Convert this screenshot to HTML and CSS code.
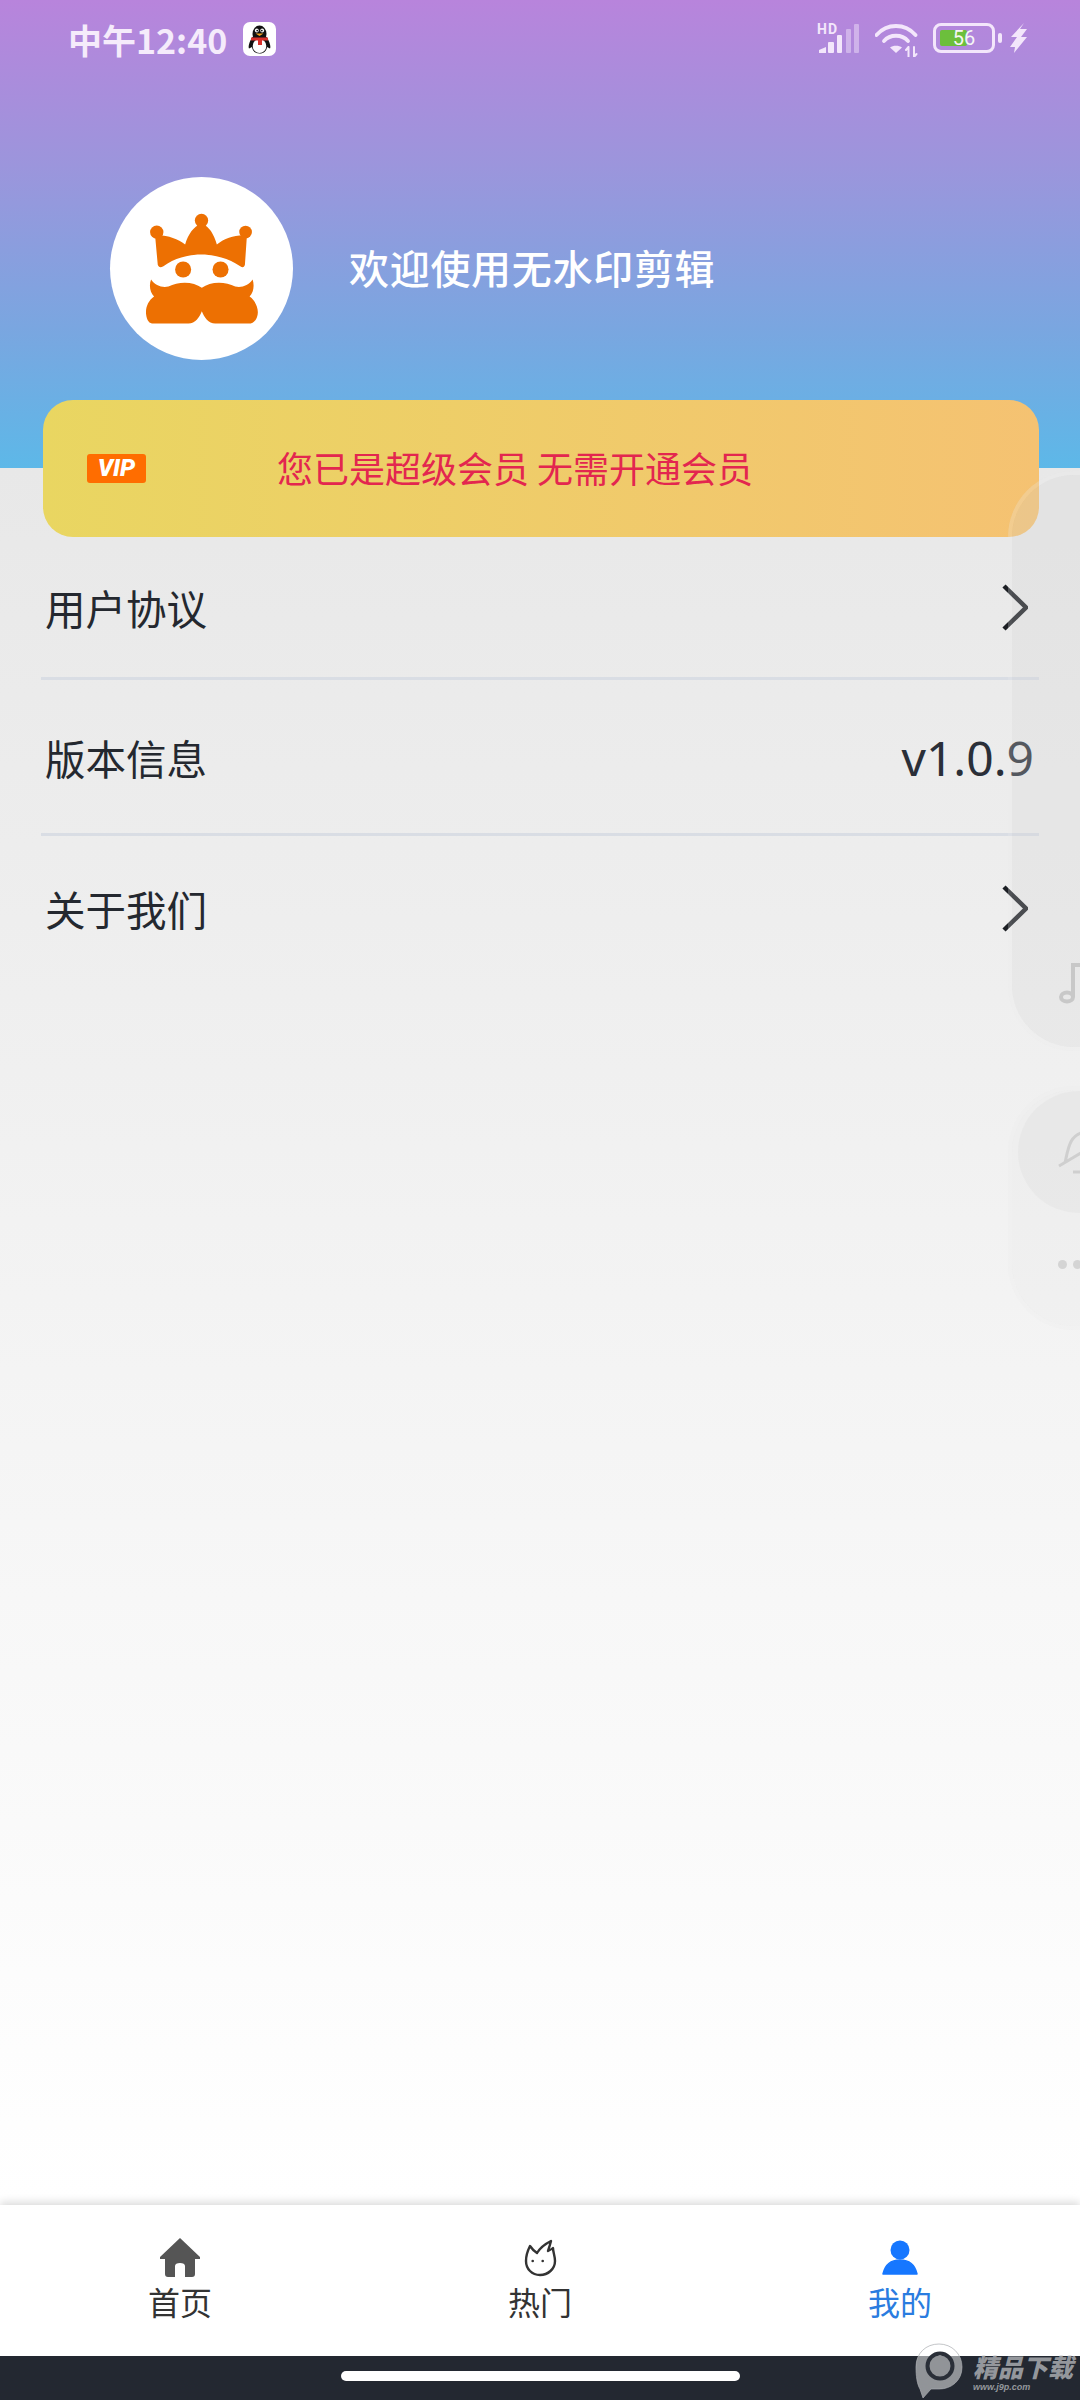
FILE: index.html
```html
<!DOCTYPE html>
<html lang="zh-CN">
<head>
  <meta charset="UTF-8">
  <title>我的</title>
  <link rel="stylesheet" href="styles.css">
</head>
<body>
<div class="page">

  <div class="status">
    <div class="status-left">
      <span class="time">中午12:40</span>
      <svg class="qq" viewBox="0 0 33 34">
        <rect width="33" height="34" rx="7" fill="#fff"/>
        <ellipse cx="16.5" cy="12" rx="7" ry="8.5" fill="#111"/>
        <path d="M9.5 15C6 20 5 25 6 26.5L9 25C9.5 29 12 31.5 16.5 31.5S23.5 29 24 25L27 26.5C28 25 27 20 23.500 15Z" fill="#111"/>
        <ellipse cx="16.500" cy="24" rx="6.800" ry="7" fill="#fff"/>
        <circle cx="13.800" cy="8.500" r="1.900" fill="#fff"/>
        <circle cx="19.200" cy="8.500" r="1.900" fill="#fff"/>
        <circle cx="14.200" cy="8.600" r=".9" fill="#111"/>
        <circle cx="18.800" cy="8.600" r=".9" fill="#111"/>
        <path d="M12.500 11.500H20.500L16.500 14Z" fill="#f0a020"/>
        <path d="M8 15.500H25V18.500H19V23H15V18.500H8Z" fill="#d9302c"/>
      </svg>
    </div>
    <div class="status-right">
      <div class="signal">
        <span class="hd">HD</span>
        <svg viewBox="0 0 43 29" class="signal-bars">
          <path d="M2 29V26L9 23V29Z" fill="#f3e6fb"/>
          <rect x="11" y="18" width="6" height="11" rx="1" fill="#f3e6fb"/>
          <rect x="20" y="11" width="5" height="18" rx="1" fill="#f3e6fb"/>
          <rect x="29" y="5" width="5" height="24" rx="1" fill="#f3e6fb" opacity=".45"/>
          <rect x="37" y="0" width="5" height="29" rx="1" fill="#f3e6fb" opacity=".45"/>
        </svg>
      </div>
      <svg class="wifi" viewBox="0 0 43 33" fill="none" stroke="#f3e6fb" stroke-linecap="round">
        <path d="M1.500 11C12 -1 30 -1 40.500 11" stroke-width="3.800"/>
        <path d="M9 17C15 10 27 10 33 17" stroke-width="3.800"/>
        <path d="M21 29L15 23.500C18 21 24 21 27 23.500Z" fill="#f3e6fb" stroke="none"/>
        <path d="M33.500 23V33M33.500 23L31 26M39 33V23M39 33L41.500 30" stroke-width="2"/>
      </svg>
      <div class="battery">
        <div class="battery-box">
          <span class="battery-fill"></span>
          <span class="battery-num">56</span>
        </div>
        <span class="battery-nub"></span>
      </div>
      <svg class="bolt" viewBox="0 0 17 30">
        <path d="M14 0L1 14H7L0 24H5L4 30L17 14H11L17 6H10Z" fill="#f3e6fb"/>
      </svg>
    </div>
  </div>

  <div class="profile">
    <div class="avatar">
      <svg viewBox="30 20 548 548">
        <circle cx="304" cy="150" r="20" fill="#ed7002"/>
        <circle cx="170" cy="185" r="20" fill="#ed7002"/>
        <circle cx="436" cy="185" r="19" fill="#ed7002"/>
        <path d="M165 195C198 192 232 205 255 222C265 190 280 168 304 160C328 168 340 190 350 222C375 203 405 192 440 195L434 283C432 292 426 292 420 287C350 240 255 240 190 287C182 292 176 292 173 283Z" fill="#ed7002"/>
        <circle cx="249" cy="297" r="24" fill="#ed7002"/>
        <circle cx="361" cy="297" r="24" fill="#ed7002"/>
        <path d="M153 327C165 345 185 352 205 348C235 332 280 332 305 352C330 332 375 332 405 348C425 352 445 345 457 327C463 345 460 365 448 378C468 392 478 420 470 440C464 455 455 459 445 459H345C325 459 312 440 305 422C298 440 285 459 265 459H160C148 459 140 450 138 430C136 410 145 390 162 378C150 365 146 345 153 327Z" fill="#ed7002"/>
      </svg>
    </div>
    <span class="welcome">欢迎使用无水印剪辑</span>
  </div>

  <div class="vip-card">
    <div class="vip-badge">VIP</div>
    <span class="vip-msg">您已是超级会员 无需开通会员</span>
  </div>

  <div class="menu">
    <div class="row row-one">
      <span>用户协议</span>
      <svg class="chev" viewBox="0 0 26 47"><path d="M2 2L24 23.500L2 45" fill="none" stroke="#1c1f24" stroke-width="4.500"/></svg>
    </div>
    <div class="row row-two">
      <span>版本信息</span>
      <span class="version">v1.0.9</span>
    </div>
    <div class="row row-three">
      <span>关于我们</span>
      <svg class="chev" viewBox="0 0 26 47"><path d="M2 2L24 23.500L2 45" fill="none" stroke="#1c1f24" stroke-width="4.500"/></svg>
    </div>
  </div>

  <div class="spacer"></div>

  <div class="tabbar">
    <div class="tab">
      <svg class="tab-icon" viewBox="0 0 40 39">
        <path d="M20 0L40 19V21H35V36C35 38 34 39 32 39H25V28C25 26 23 25 20 25S15 26 15 28V39H8C6 39 5 38 5 36V21H0V19Z" fill="#555"/>
      </svg>
      <span>首页</span>
    </div>
    <div class="tab">
      <svg class="tab-icon" viewBox="0 0 40 39" fill="none" stroke="#333" stroke-width="2.400" stroke-linejoin="round">
        <path d="M10 8C12 11 14 13 17 15C20 10 25 6 31 3C30 7 29 10 28 13C30 12 32 11 33 10C33 14 35 18 35 23C35 31 28 37 20 37C12 37 6 31 6 23C6 17 8 12 10 8Z"/>
        <circle cx="12.700" cy="23" r="1.300" fill="#333" stroke="none"/>
        <circle cx="22.700" cy="23" r="1.300" fill="#333" stroke="none"/>
      </svg>
      <span>热门</span>
    </div>
    <div class="tab tab-active">
      <svg class="tab-icon" viewBox="0 0 40 39">
        <circle cx="20" cy="12" r="9.500" fill="#1677ff"/>
        <path d="M3 36C5 27 11 22 20 22S35 27 37 36Z" fill="#1677ff" stroke="#1677ff" stroke-linejoin="round" stroke-width="1.500"/>
      </svg>
      <span>我的</span>
    </div>
  </div>

  <div class="homebar">
    <span class="home-pill"></span>
  </div>

  <!-- floating panel from the system, sits over the page -->
  <div class="float-panel panel-top">
    <svg class="note" viewBox="0 0 30 42" fill="none" stroke="#c8c8c8" stroke-width="4">
      <ellipse cx="8" cy="35" rx="6" ry="4.500"/>
      <path d="M14 35V3H40"/>
    </svg>
  </div>
  <div class="float-panel panel-low">
    <span class="panel-circle"></span>
    <svg class="bell" viewBox="0 0 30 46" fill="none" stroke="#cfcfcf" stroke-width="3">
      <path d="M0 36L30 18M6 33C9 20 10 4 26 2H40M14 42H40"/>
    </svg>
    <div class="dots"><i></i><i></i></div>
  </div>

  <div class="watermark">
    <svg class="wm-logo" viewBox="0 0 48 55">
      <path d="M1 24C1 10 11 1 24 1S47 11 47 24C47 38 36 46 24 46L16 46L8 55L5 46C2 41 1 33 1 24Z" fill="rgba(255,255,255,0.5)" stroke="rgba(170,172,176,0.7)" stroke-width="1"/>
      <circle cx="25" cy="23" r="12.500" fill="none" stroke="#2a2f38" stroke-width="4"/>
    </svg>
    <div class="wm-words">
      <span class="wm-name">精品下载</span>
      <span class="wm-url">www.j9p.com</span>
    </div>
  </div>

</div>
</body>
</html>
```

FILE: styles.css
```css
* {
  box-sizing: border-box;
}
html, body {
  margin: 0;
  padding: 0;
}
body {
  font-family: "Noto Sans CJK SC", "Noto Sans", sans-serif;
  color: #24282f;
}
.page {
  position: relative;
  width: 1080px;
  height: 2400px;
  overflow: hidden;
  display: flex;
  flex-direction: column;
  background:
    linear-gradient(180deg, #b884dc 0%, #9c95dc 35%, #7aa6e0 70%, #5db8e8 100%) 0 0 / 100% 468px no-repeat,
    linear-gradient(180deg, #e8e8e8 468px, #ffffff 2200px);
}

/* status bar */
.status {
  height: 80px;
  display: flex;
  align-items: center;
  justify-content: space-between;
  padding: 0 53px 0 68px;
  color: #f5ebfb;
}
.status-left {
  display: flex;
  align-items: center;
  gap: 16px;
}
.time {
  font-size: 34px;
  font-weight: 700;
  line-height: 40px;
}
.qq {
  width: 33px;
  height: 34px;
  margin-top: -2px;
}
.status-right {
  display: flex;
  align-items: flex-end;
  gap: 15px;
  height: 30px;
  margin-top: -4px;
}
.signal {
  position: relative;
  width: 43px;
  height: 30px;
}
.hd {
  position: absolute;
  left: 0;
  top: -2px;
  font-family: "Roboto", sans-serif;
  font-size: 14px;
  font-weight: 700;
  letter-spacing: 1px;
  line-height: 16px;
  color: #f3e6fb;
}
.signal-bars {
  position: absolute;
  left: 0;
  bottom: 0;
  width: 43px;
  height: 29px;
}
.wifi {
  width: 43px;
  height: 33px;
  margin-bottom: -4px;
}
.battery {
  display: flex;
  align-items: center;
  gap: 3px;
}
.battery-box {
  position: relative;
  width: 62px;
  height: 30px;
  border: 3px solid #f3e6fb;
  border-radius: 8px;
  display: flex;
  align-items: center;
  justify-content: center;
}
.battery-fill {
  position: absolute;
  left: 4px;
  top: 4px;
  bottom: 4px;
  width: 27px;
  border-radius: 2px;
  background: #6cbf3c;
}
.battery-num {
  position: relative;
  font-family: "Roboto", sans-serif;
  font-size: 20px;
  line-height: 22px;
  color: #f5f5f5;
}
.battery-nub {
  width: 4px;
  height: 10px;
  border-radius: 2px;
  background: #f3e6fb;
}
.bolt {
  width: 17px;
  height: 30px;
  margin-left: -7px;
}

/* avatar and name */
.profile {
  display: flex;
  align-items: center;
  gap: 56px;
  margin-top: 97px;
  padding-left: 110px;
}
.avatar {
  width: 183px;
  height: 183px;
  border-radius: 50%;
  background: #fff;
}
.avatar svg {
  display: block;
  width: 183px;
  height: 183px;
}
.welcome {
  margin-top: -3px;
  font-size: 40px;
  font-weight: 500;
  letter-spacing: 0.7px;
  color: #fff;
}

/* vip card */
.vip-card {
  display: flex;
  align-items: center;
  height: 137px;
  margin: 40px 41px 0 43px;
  padding-left: 44px;
  border-radius: 30px;
  background: linear-gradient(90deg, #e9d661, #f5c272);
}
.vip-badge {
  width: 59px;
  height: 29px;
  border-radius: 3px;
  background: #ff6d00;
  font-family: "Roboto", sans-serif;
  font-size: 24px;
  font-weight: 900;
  font-style: italic;
  line-height: 29px;
  text-align: center;
  color: #fff;
}
.vip-msg {
  margin-left: 131px;
  margin-top: -3px;
  font-size: 36px;
  color: #e3264f;
}

/* menu rows */
.menu {
  margin: 0 41px;
}
.row {
  display: flex;
  align-items: center;
  justify-content: space-between;
  padding: 1px 11px 0 4px;
  font-size: 40.5px;
  color: #24282f;
}
.row-one {
  height: 143px;
  border-bottom: 3px solid #d9dde4;
}
.row-two {
  height: 156px;
  border-bottom: 3px solid #d9dde4;
}
.row-three {
  height: 144px;
}
.chev {
  width: 26px;
  height: 47px;
}
.version {
  margin-right: -6px;
  font-family: "Noto Sans", sans-serif;
  font-size: 48px;
  color: #2a2f38;
}

.spacer {
  flex: 1;
}

/* bottom tabs */
.tabbar {
  height: 151px;
  display: flex;
  background: #fff;
  box-shadow: 0 -3px 8px rgba(0,0,0,0.14);
}
.tab {
  width: 360px;
  display: flex;
  flex-direction: column;
  align-items: center;
  padding-top: 33px;
  font-size: 32px;
  line-height: 40px;
  color: #333;
}
.tab-active {
  color: #2a7ce0;
}
.tab-icon {
  display: block;
  width: 40px;
  height: 39px;
  margin-bottom: 4px;
}
.homebar {
  height: 44px;
  display: flex;
  justify-content: center;
  padding-top: 15px;
  background: #232831;
}
.home-pill {
  width: 399px;
  height: 10px;
  border-radius: 5px;
  background: #fff;
}

/* overlay panel on the right */
.float-panel {
  position: absolute;
  left: 1012px;
  width: 130px;
  border-radius: 62px;
  background: rgba(212,212,212,0.25);
  box-shadow: 0 0 0 4px rgba(235,235,235,0.25);
}
.panel-top {
  top: 475px;
  height: 572px;
}
.panel-low {
  top: 1090px;
  height: 236px;
  background: rgba(232,232,232,0.25);
}
.panel-circle {
  position: absolute;
  left: 6px;
  top: 1px;
  width: 122px;
  height: 122px;
  border-radius: 50%;
  background: rgba(215,215,215,0.22);
}
.note {
  position: absolute;
  left: 47px;
  top: 487px;
  width: 30px;
  height: 42px;
  overflow: visible;
}
.bell {
  position: absolute;
  left: 47px;
  top: 40px;
  width: 30px;
  height: 46px;
  overflow: visible;
}
.dots {
  position: absolute;
  left: 46px;
  top: 170px;
  display: flex;
  gap: 6px;
}
.dots i {
  width: 9px;
  height: 9px;
  border-radius: 50%;
  background: #d4d4d4;
}

/* site watermark */
.watermark {
  position: absolute;
  left: 915px;
  top: 2343px;
  display: flex;
  gap: 10px;
}
.wm-logo {
  width: 48px;
  height: 55px;
}
.wm-words {
  display: flex;
  flex-direction: column;
  padding-top: 9px;
  color: #94979c;
}
.wm-name {
  font-size: 25px;
  font-weight: 900;
  font-style: italic;
  line-height: 29px;
  white-space: nowrap;
}
.wm-url {
  font-family: "Liberation Sans", sans-serif;
  font-size: 9px;
  font-weight: 700;
  font-style: italic;
  line-height: 12px;
}
```
